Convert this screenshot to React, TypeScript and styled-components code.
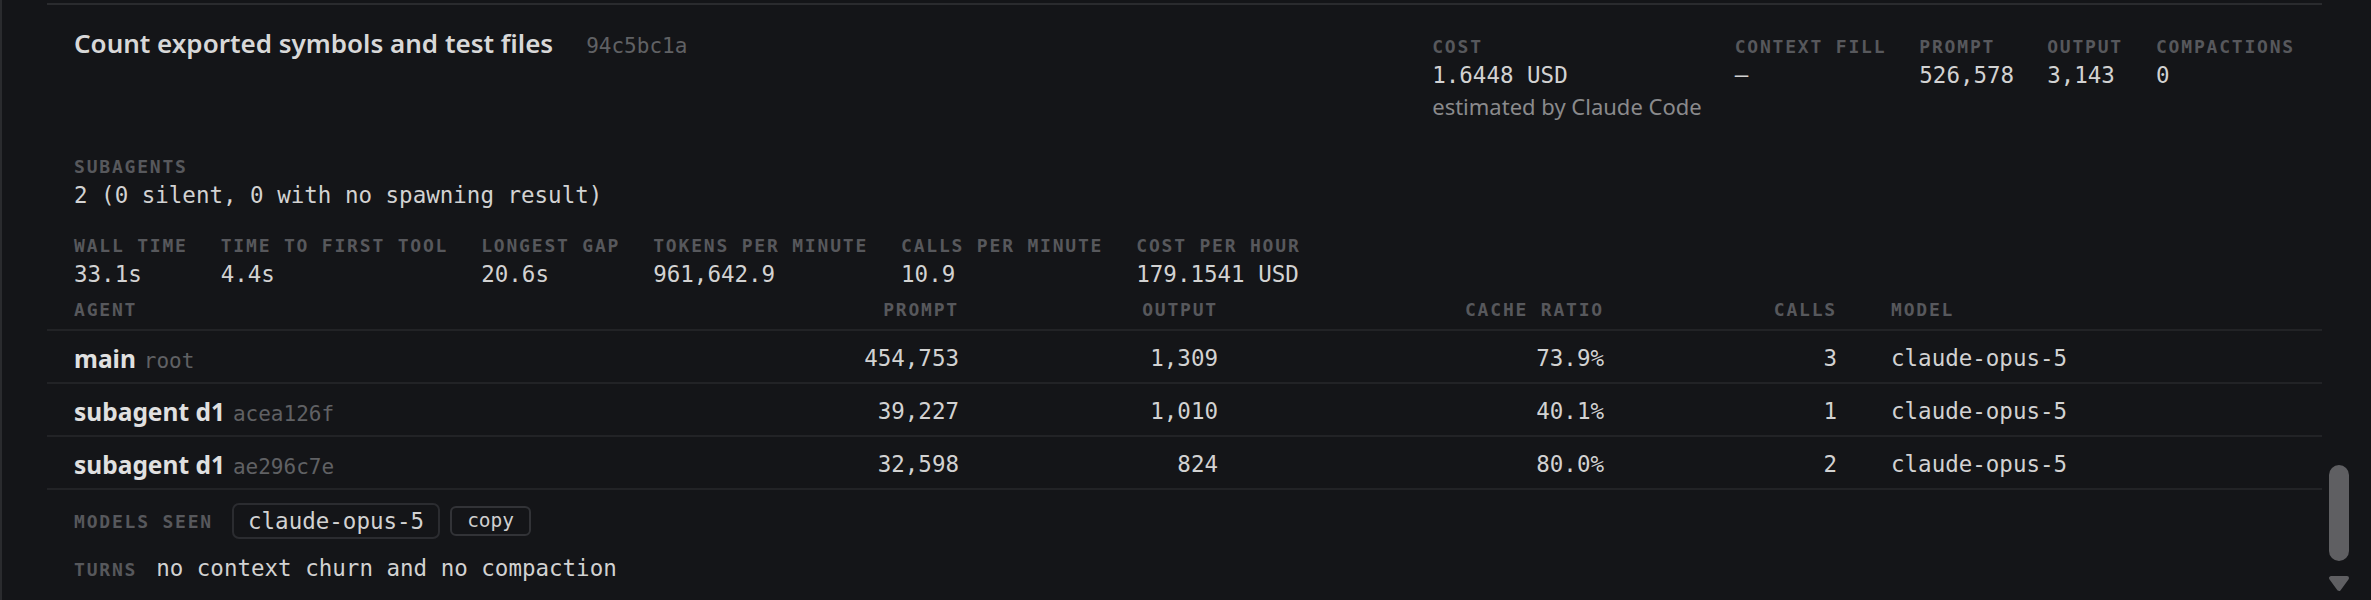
import React from 'react';
import styled, { createGlobalStyle } from 'styled-components';

const MONO = '"DejaVu Sans Mono", "Liberation Mono", monospace';
const SANS = '"Noto Sans", "Open Sans", sans-serif';

const GlobalStyle = createGlobalStyle`
  html, body {
    margin: 0;
    padding: 0;
    background: #141518;
  }
  body {
    font-family: ${SANS};
  }
`;

const Page = styled.div`
  display: flex;
  height: 600px;
  overflow: hidden;
  background: #141518;
  border-left: 2px solid #2a2b2e;
  box-sizing: border-box;
`;

const Panel = styled.section`
  flex: 1;
  min-width: 0;
  margin: 3px 0 0 45px;
  border-top: 2px solid #2a2b2e;
  color: #d2d2d2;
`;

const Header = styled.div`
  display: flex;
  justify-content: space-between;
  align-items: baseline;
  padding: 20px 27px 0;
`;

const TitleRow = styled.div`
  display: flex;
  align-items: baseline;
  gap: 33px;
`;

const Title = styled.h2`
  margin: 0;
  font-family: ${SANS};
  font-size: 26px;
  font-weight: 600;
  line-height: 36px;
  color: #d8d8d8;
`;

const Hash = styled.span`
  font-family: ${MONO};
  font-size: 21px;
  color: #606164;
`;

const MetricGroup = styled.div`
  display: flex;
  gap: 33px;
`;

const Metric = styled.div`
  display: flex;
  flex-direction: column;
`;

const Label = styled.div`
  font-family: ${MONO};
  font-size: 18px;
  font-weight: 700;
  letter-spacing: 0.1em;
  line-height: 25px;
  text-transform: uppercase;
  color: #57585c;
  white-space: nowrap;
`;

const Value = styled.div`
  font-family: ${MONO};
  font-size: 22.5px;
  line-height: 32px;
  color: #d2d2d2;
  white-space: nowrap;
`;

const Note = styled.div`
  font-family: ${SANS};
  font-size: 22px;
  line-height: 31px;
  color: #8a8a8c;
  white-space: nowrap;
`;

const Section = styled.div<{ $top: number }>`
  padding: ${({ $top }) => $top}px 27px 0;
`;

const StatsRow = styled.div`
  display: flex;
  gap: 33px;
  padding: 22px 27px 0;
`;

const Table = styled.div`
  display: flex;
  flex-direction: column;
`;

const TableRow = styled.div<{ $head?: boolean }>`
  display: grid;
  grid-template-columns: 1fr 338px 259px 386px 233px 458px;
  align-items: center;
  border-bottom: 2px solid #222326;
  line-height: ${({ $head }) => ($head ? '25px' : '27px')};
  & > * {
    padding: ${({ $head }) => ($head ? '7px 27px 7px' : '14px 27px 10px')};
  }
`;

const Cell = styled.div<{ $right?: boolean }>`
  font-family: ${MONO};
  font-size: 22.5px;
  color: #d2d2d2;
  text-align: ${({ $right }) => ($right ? 'right' : 'left')};
  white-space: nowrap;
`;

const HeadCell = styled(Label)<{ $right?: boolean }>`
  text-align: ${({ $right }) => ($right ? 'right' : 'left')};
`;

const AgentCell = styled.div`
  display: flex;
  align-items: baseline;
  white-space: nowrap;
`;

const AgentName = styled.span`
  font-family: ${SANS};
  font-size: 24.5px;
  font-weight: 700;
  line-height: 27px;
  color: #e0e0e0;
`;

const AgentId = styled.span`
  margin-left: 8px;
  font-family: ${MONO};
  font-size: 21px;
  line-height: 20px;
  color: #606164;
`;

const ModelsRow = styled.div`
  display: flex;
  align-items: center;
  gap: 19px;
  padding: 13px 27px 0;
`;

const ChipGroup = styled.div`
  display: flex;
  align-items: center;
  gap: 10px;
`;

const Chip = styled.span`
  box-sizing: border-box;
  height: 36px;
  padding: 0 14px;
  border: 2px solid #2b2c30;
  border-radius: 7px;
  font-family: ${MONO};
  font-size: 22.5px;
  line-height: 32px;
  color: #d2d2d2;
`;

const CopyButton = styled.button`
  box-sizing: border-box;
  height: 30px;
  padding: 0 15px;
  border: 2px solid #323337;
  border-radius: 6px;
  background: transparent;
  font-family: ${MONO};
  font-size: 19.5px;
  line-height: 26px;
  color: #cfcfcf;
  cursor: pointer;
`;

const TurnsRow = styled.div`
  display: flex;
  align-items: baseline;
  gap: 19px;
  padding: 13px 27px 0;
`;

const Rail = styled.div`
  flex: 0 0 49px;
  display: flex;
  flex-direction: column;
  justify-content: flex-end;
  padding: 0 0 8px 6px;
  box-sizing: border-box;
`;

const RailInner = styled.div`
  width: 22px;
  display: flex;
  flex-direction: column;
  align-items: center;
  gap: 14px;
`;

const Thumb = styled.div`
  width: 20px;
  height: 96px;
  border-radius: 10px;
  background: #5f5f62;
`;

const metrics = [
  { label: 'Cost', value: '1.6448 USD', note: 'estimated by Claude Code' },
  { label: 'Context fill', value: '—' },
  { label: 'Prompt', value: '526,578' },
  { label: 'Output', value: '3,143' },
  { label: 'Compactions', value: '0' },
];

const stats = [
  { label: 'Wall time', value: '33.1s' },
  { label: 'Time to first tool', value: '4.4s' },
  { label: 'Longest gap', value: '20.6s' },
  { label: 'Tokens per minute', value: '961,642.9' },
  { label: 'Calls per minute', value: '10.9' },
  { label: 'Cost per hour', value: '179.1541 USD' },
];

const agents = [
  { name: 'main', id: 'root', prompt: '454,753', output: '1,309', cache: '73.9%', calls: '3', model: 'claude-opus-5' },
  { name: 'subagent d1', id: 'acea126f', prompt: '39,227', output: '1,010', cache: '40.1%', calls: '1', model: 'claude-opus-5' },
  { name: 'subagent d1', id: 'ae296c7e', prompt: '32,598', output: '824', cache: '80.0%', calls: '2', model: 'claude-opus-5' },
];

const App: React.FC = () => {
  return (
    <>
      <GlobalStyle />
      <Page>
        <Panel>
          <Header>
            <TitleRow>
              <Title>Count exported symbols and test files</Title>
              <Hash>94c5bc1a</Hash>
            </TitleRow>
            <MetricGroup>
              {metrics.map(m => (
                <Metric key={m.label}>
                  <Label>{m.label}</Label>
                  <Value>{m.value}</Value>
                  {m.note && <Note>{m.note}</Note>}
                </Metric>
              ))}
            </MetricGroup>
          </Header>

          <Section $top={32}>
            <Label>Subagents</Label>
            <Value>2 (0 silent, 0 with no spawning result)</Value>
          </Section>

          <StatsRow>
            {stats.map(s => (
              <Metric key={s.label}>
                <Label>{s.label}</Label>
                <Value>{s.value}</Value>
              </Metric>
            ))}
          </StatsRow>

          <Table>
            <TableRow $head>
              <HeadCell>Agent</HeadCell>
              <HeadCell $right>Prompt</HeadCell>
              <HeadCell $right>Output</HeadCell>
              <HeadCell $right>Cache ratio</HeadCell>
              <HeadCell $right>Calls</HeadCell>
              <HeadCell>Model</HeadCell>
            </TableRow>
            {agents.map(a => (
              <TableRow key={a.id}>
                <AgentCell>
                  <AgentName>{a.name}</AgentName>
                  <AgentId>{a.id}</AgentId>
                </AgentCell>
                <Cell $right>{a.prompt}</Cell>
                <Cell $right>{a.output}</Cell>
                <Cell $right>{a.cache}</Cell>
                <Cell $right>{a.calls}</Cell>
                <Cell>{a.model}</Cell>
              </TableRow>
            ))}
          </Table>

          <ModelsRow>
            <Label>Models seen</Label>
            <ChipGroup>
              <Chip>claude-opus-5</Chip>
              <CopyButton>copy</CopyButton>
            </ChipGroup>
          </ModelsRow>

          <TurnsRow>
            <Label>Turns</Label>
            <Value>no context churn and no compaction</Value>
          </TurnsRow>
        </Panel>

        <Rail>
          <RailInner>
            <Thumb />
            <svg width="22" height="17" viewBox="0 0 22 17">
              <path d="M3 3 H19 L11 14 Z" fill="#5f5f62" stroke="#5f5f62" strokeWidth="4" strokeLinejoin="round" />
            </svg>
          </RailInner>
        </Rail>
      </Page>
    </>
  );
};

export default App;
